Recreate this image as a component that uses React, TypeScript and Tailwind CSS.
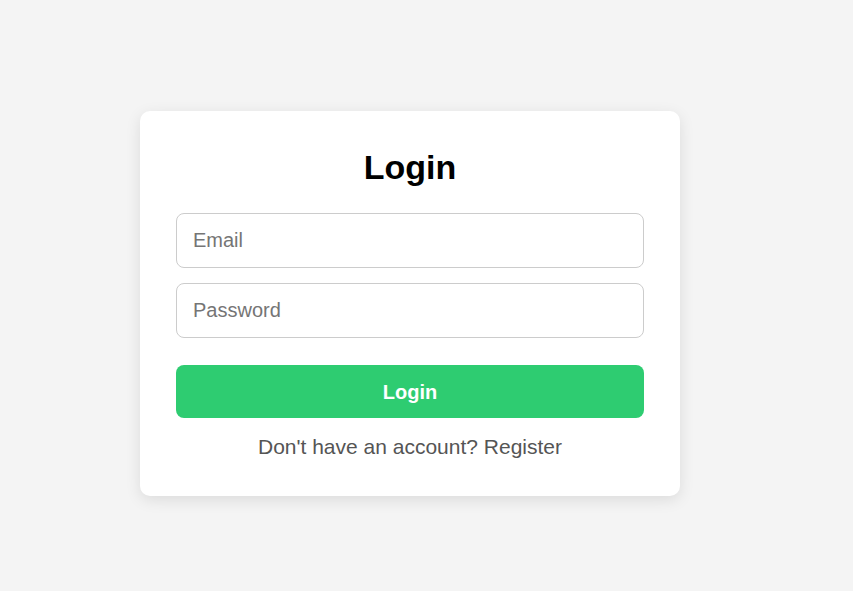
export default function App() {
  return (
    <div className="min-h-screen w-full bg-[#f4f4f4] pl-[140px] pt-[111px] font-['Liberation_Sans',Arial,sans-serif]">
      <div className="flex w-[540px] flex-col rounded-[10px] bg-white px-[36px] pb-[37px] pt-[37px] shadow-[0_4px_15px_rgba(0,0,0,0.1)]">
        <h1 className="mb-[26px] text-center text-[34px] font-bold leading-[39px] text-black">Login</h1>

        <form className="flex flex-col" onSubmit={(e) => e.preventDefault()}>
          <input
            type="email"
            placeholder="Email"
            className="h-[55px] w-full rounded-[8px] border border-[#cccccc] px-[16px] text-[20px] text-black outline-none placeholder:text-[#757575]"
          />
          <input
            type="password"
            placeholder="Password"
            className="mt-[15px] h-[55px] w-full rounded-[8px] border border-[#cccccc] px-[16px] text-[20px] text-black outline-none placeholder:text-[#757575]"
          />
          <button
            type="submit"
            className="mt-[27px] h-[53px] w-full rounded-[8px] bg-[#2ecc71] text-[20px] font-bold text-white"
          >
            Login
          </button>
        </form>

        <p className="mt-[17px] text-center text-[21px] leading-[24px] text-[#555555]">
          Don't have an account? Register
        </p>
      </div>
    </div>
  );
}
